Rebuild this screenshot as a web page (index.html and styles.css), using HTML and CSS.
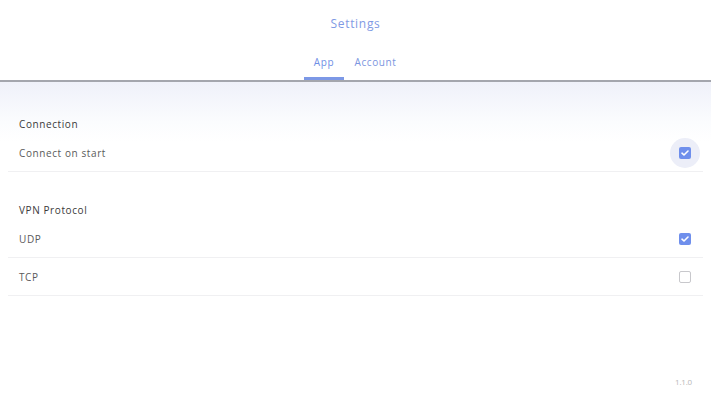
FILE: index.html
```html
<!DOCTYPE html>
<html>
<head>
<meta charset="utf-8">
<link rel="stylesheet" href="styles.css">
</head>
<body>
<div class="app">
  <header class="header">
    <div class="title">Settings</div>
    <nav class="tabs">
      <div class="tab active">App</div>
      <div class="tab">Account</div>
    </nav>
  </header>
  <main class="content">
    <section class="section first">
      <div class="section-title">Connection</div>
      <div class="row">
        <span class="label">Connect on start</span>
        <span class="check-wrap focus"><span class="check on"><svg viewBox="0 0 12 12" width="12" height="12"><path d="M3 6.2 L5 8 L9 4" fill="none" stroke="#fff" stroke-width="1.6" stroke-linecap="round" stroke-linejoin="round"/></svg></span></span>
      </div>
    </section>
    <section class="section">
      <div class="section-title">VPN Protocol</div>
      <div class="row">
        <span class="label">UDP</span>
        <span class="check-wrap"><span class="check on"><svg viewBox="0 0 12 12" width="12" height="12"><path d="M3 6.2 L5 8 L9 4" fill="none" stroke="#fff" stroke-width="1.6" stroke-linecap="round" stroke-linejoin="round"/></svg></span></span>
      </div>
      <div class="row">
        <span class="label">TCP</span>
        <span class="check-wrap"><span class="check"></span></span>
      </div>
    </section>
  </main>
  <div class="version">1.1.0</div>
</div>
</body>
</html>
```
FILE: styles.css
```css
html, body {
  margin: 0;
  padding: 0;
  background: #fff;
}
body {
  font-family: "Open Sans", "Noto Sans", sans-serif;
  width: 711px;
  height: 400px;
  overflow: hidden;
}
.app {
  position: relative;
  height: 400px;
  display: flex;
  flex-direction: column;
}
.header {
  height: 80px;
  border-bottom: 2px solid #a4a6ae;
  display: flex;
  flex-direction: column;
  align-items: center;
  box-sizing: content-box;
}
.title {
  margin-top: 15px;
  height: 18px;
  line-height: 18px;
  font-size: 12px;
  color: #7f9ae4;
  letter-spacing: 0.7px;
}
.tabs {
  margin-top: 20px;
  display: flex;
}
.tab {
  height: 27px;
  line-height: 14px;
  font-size: 10px;
  letter-spacing: 0.6px;
  color: #7b95e0;
  padding: 2px 0 0;
  box-sizing: border-box;
  width: 63px;
  text-align: center;
}
.tab.active {
  width: 40px;
  color: #6f8fe6;
  border-bottom: 3px solid #7c98e6;
}
.content {
  padding: 0 8px;
  background: linear-gradient(#eff1fa 0px, #fbfcfe 40px, #ffffff 60px);
  flex: 1;
}
.section-title {
  height: 20px;
  line-height: 20px;
  font-size: 10px;
  letter-spacing: 0.6px;
  color: #3a3a3a;
  padding-left: 11px;
}
.section.first {
  padding-top: 32px;
}
.section {
  padding-top: 28px;
}
.row {
  height: 37px;
  border-bottom: 1px solid #f0f0f2;
  display: flex;
  align-items: center;
  justify-content: space-between;
  padding: 0 12px 0 11px;
}
.label {
  font-size: 10px;
  letter-spacing: 0.6px;
  color: #5a5a5a;
}
.check-wrap {
  width: 12px;
  height: 12px;
  display: flex;
  align-items: center;
  justify-content: center;
  position: relative;
}
.check-wrap.focus::before {
  content: "";
  position: absolute;
  left: -9px;
  top: -9px;
  width: 30px;
  height: 30px;
  border-radius: 50%;
  background: #eceef8;
}
.check {
  position: relative;
  width: 12px;
  height: 12px;
  box-sizing: border-box;
  border-radius: 2px;
  border: 1.5px solid #c8c8cc;
  background: #fff;
  display: block;
}
.check.on {
  border: none;
  background: #6f8fec;
}
.check svg {
  display: block;
}
.version {
  position: absolute;
  right: 19px;
  top: 376px;
  font-size: 8px;
  letter-spacing: -0.2px;
  color: #b8b8b8;
}
```
